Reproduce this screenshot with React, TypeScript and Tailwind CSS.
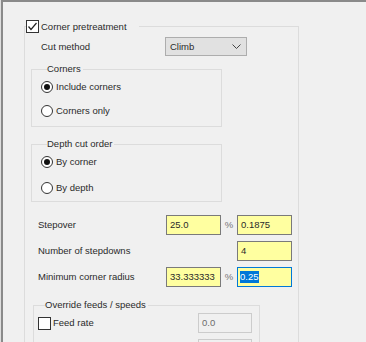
import type { ReactNode } from "react";

const CheckBox = ({ checked, label }: { checked?: boolean; label: string }) => (
  <div className="flex h-[13px] items-center gap-[2px]">
    <span className="flex h-[13px] w-[13px] items-center justify-center border border-[#333] bg-white">
      {checked && (
        <svg width="11" height="11" viewBox="0 0 11 11">
          <polyline points="1.5,5.5 4,8.5 9.5,2" fill="none" stroke="#222" strokeWidth="1.2" />
        </svg>
      )}
    </span>
    <span>{label}</span>
  </div>
);

const Radio = ({ checked, label }: { checked?: boolean; label: string }) => (
  <div className="flex h-[14px] items-center gap-[3px]">
    <span className="flex h-[12px] w-[12px] items-center justify-center rounded-full border border-[#333] bg-white">
      {checked && <span className="h-[6px] w-[6px] rounded-full bg-[#111]" />}
    </span>
    <span>{label}</span>
  </div>
);

const Field = ({ value, kind = "yellow" }: { value: string; kind?: "yellow" | "focus" | "off" }) => {
  if (kind === "focus")
    return (
      <span className="flex h-[20px] w-[55px] items-center border border-[#0078d7] bg-[#ffffa0] px-[2px]">
        <span className="bg-[#0078d7] text-white">{value}</span>
      </span>
    );
  if (kind === "off")
    return (
      <span className="flex h-[20px] w-[54px] items-center border border-[#cccccc] bg-[#f0f0f0] px-[3px] text-[#6d6d6d]">
        {value}
      </span>
    );
  return (
    <span className="flex h-[20px] w-[55px] items-center border border-[#7a7a7a] bg-[#ffffa0] px-[3px]">{value}</span>
  );
};

const GroupBox = ({ legend, className, children }: { legend: string; className: string; children: ReactNode }) => (
  <fieldset className={`border border-[#dcdcdc] ${className}`}>
    <legend className="ml-[6px] h-[12px] pr-[2px] leading-[12px]">{legend}</legend>
    {children}
  </fieldset>
);

export default function App() {
  return (
    <div className="h-[342px] w-[366px] overflow-hidden bg-[#dedede] pl-[1px] font-['Liberation_Sans',Arial,sans-serif] text-[9.5px] leading-[12px] text-[#2a2a2a]">
      <div className="h-full border-l-2 border-t-2 border-[#8a8a8a] bg-[#f0f0f0] pl-[21px] pt-[18px]">
        {/* Corner pretreatment */}
        <fieldset className="h-[340px] w-[275px] border border-[#dcdcdc]">
          <legend className="ml-[1px] pr-[12px]">
            <CheckBox checked label="Corner pretreatment" />
          </legend>

          <div className="mt-[4px] flex h-[19px] items-center pl-[16px]">
            <span className="w-[124px]">Cut method</span>
            <span className="flex h-[19px] w-[82px] items-center justify-between border border-[#adadad] bg-[#e1e1e1] pl-[4px] pr-[5px]">
              <span>Climb</span>
              <svg width="9" height="6" viewBox="0 0 9 6">
                <polyline points="0.5,0.5 4.5,4.5 8.5,0.5" fill="none" stroke="#444" strokeWidth="1" />
              </svg>
            </span>
          </div>

          <GroupBox legend="Corners" className="ml-[6px] mt-[7px] w-[191px] pb-[8px] pl-[9px] pt-[5px]">
            <div className="flex flex-col gap-[10px]">
              <Radio checked label="Include corners" />
              <Radio label="Corners only" />
            </div>
          </GroupBox>

          <GroupBox legend="Depth cut order" className="ml-[6px] mt-[11px] w-[191px] pb-[6px] pl-[9px] pt-[5px]">
            <div className="flex flex-col gap-[12px]">
              <Radio checked label="By corner" />
              <Radio label="By depth" />
            </div>
          </GroupBox>

          <div className="mt-[13px] flex flex-col gap-[6px] pl-[13px]">
            <div className="flex items-center">
              <span className="w-[128px]">Stepover</span>
              <Field value="25.0" />
              <span className="w-[16px] text-center text-[#777]">%</span>
              <Field value="0.1875" />
            </div>
            <div className="flex items-center">
              <span className="w-[199px]">Number of stepdowns</span>
              <Field value="4" />
            </div>
            <div className="flex items-center">
              <span className="w-[128px]">Minimum corner radius</span>
              <Field value="33.333333" />
              <span className="w-[16px] text-center text-[#777]">%</span>
              <Field value="0.25" kind="focus" />
            </div>
          </div>

          <fieldset className="ml-[8px] mt-[12px] w-[227px] border border-[#dcdcdc] pl-[4px] pt-[2px]">
            <legend className="ml-[7px] h-[12px] pr-[2px] leading-[12px]">Override feeds / speeds</legend>
            <div className="flex flex-col gap-[6px]">
              <div className="flex items-center">
                <span className="w-[160px]">
                  <CheckBox label="Feed rate" />
                </span>
                <Field value="0.0" kind="off" />
              </div>
              <div className="flex items-center">
                <span className="w-[160px]" />
                <Field value="" kind="off" />
              </div>
            </div>
          </fieldset>
        </fieldset>
      </div>
    </div>
  );
}
